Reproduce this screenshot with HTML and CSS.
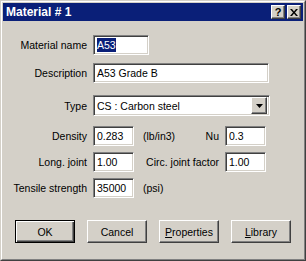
FILE: index.html
```html
<!DOCTYPE html>
<html lang="en">
<head>
    <meta charset="UTF-8">
    <title>Material # 1</title>
    <link rel="stylesheet" href="styles.css">
</head>
<body>
    <div class="window">
        <div class="frame">
            <div class="titlebar">
                <span class="title">Material # 1</span>
                <div class="titleButtons">
                    <span class="tbtn">?</span>
                    <span class="tbtn close">
                        <svg width="8" height="7" viewBox="0 0 8 7"><path d="M0 0h2l2 2.5L6 0h2L5 3.5 8 7H6L4 4.5 2 7H0l3-3.5z" fill="#000"/></svg>
                    </span>
                </div>
            </div>

            <div class="row r1">
                <label class="label">Material name</label>
                <div class="field w-name"><span class="sel">A53</span></div>
            </div>

            <div class="row r2">
                <label class="label">Description</label>
                <div class="field w-desc">A53 Grade B</div>
            </div>

            <div class="row r3">
                <label class="label">Type</label>
                <div class="field combo">
                    <span class="comboText">CS : Carbon steel</span>
                    <span class="dropBtn">
                        <svg width="7" height="4" viewBox="0 0 7 4"><path d="M0 0h7L3.5 4z" fill="#000"/></svg>
                    </span>
                </div>
            </div>

            <div class="row r4">
                <label class="label">Density</label>
                <div class="field w-num">0.283</div>
                <div class="mid">
                    <span class="unit">(lb/in3)</span>
                    <span>Nu</span>
                </div>
                <div class="field w-num">0.3</div>
            </div>

            <div class="row r5">
                <label class="label">Long. joint</label>
                <div class="field w-num">1.00</div>
                <div class="mid">
                    <span></span>
                    <span>Circ. joint factor</span>
                </div>
                <div class="field w-num">1.00</div>
            </div>

            <div class="row r6">
                <label class="label">Tensile strength</label>
                <div class="field w-num">35000</div>
                <div class="mid">
                    <span class="unit">(psi)</span>
                </div>
            </div>

            <div class="buttons">
                <button class="btn default">OK</button>
                <button class="btn">Cancel</button>
                <button class="btn"><u>P</u>roperties</button>
                <button class="btn"><u>L</u>ibrary</button>
            </div>
        </div>
    </div>
</body>
</html>
```

FILE: styles.css
```css
*{
    margin: 0px;
    padding: 0px;
    box-sizing: border-box;
}
body{
    background: #d4d0c8;
    font-family: "Liberation Sans", Arial, sans-serif;
    font-size: 10.5px;
    color: #000;
}
.window{
    width: 306px;
    height: 261px;
    border: 1px solid;
    border-color: #d4d0c8 #404040 #404040 #d4d0c8;
}
.frame{
    height: 100%;
    border: 1px solid;
    border-color: #fff #808080 #808080 #fff;
    padding: 1px;
}
/* title bar */
.titlebar{
    height: 18px;
    background: #0a1f78;
    display: flex;
    align-items: center;
    justify-content: space-between;
    padding: 0 2px 0 3px;
}
.title{
    color: #fff;
    font-weight: bold;
    font-size: 12px;
}
.titleButtons{
    display: flex;
    gap: 2px;
}
.tbtn{
    width: 14px;
    height: 14px;
    background: #d4d0c8;
    border: 1px solid;
    border-color: #fff #404040 #404040 #fff;
    box-shadow: inset -1px -1px #808080;
    display: flex;
    align-items: center;
    justify-content: center;
    font-weight: bold;
    font-size: 11px;
    line-height: 1;
}
/* rows */
.row{
    display: flex;
    align-items: center;
}
.r1{ margin-top: 14px; }
.r2{ margin-top: 8px; }
.r3{ margin-top: 12px; }
.r4{ margin-top: 10px; }
.r5{ margin-top: 6px; }
.r6{ margin-top: 6px; }
.label{
    width: 84px;
    text-align: right;
    margin-right: 6px;
}
.field{
    height: 20px;
    background: #fff;
    border: 1px solid;
    border-color: #808080 #fff #fff #808080;
    box-shadow: inset 1px 1px #404040, inset -1px -1px #d4d0c8;
    padding: 0 3px;
    line-height: 18px;
    white-space: nowrap;
    overflow: hidden;
}
.w-name{ width: 56px; }
.w-desc{ width: 176px; }
.w-num{ width: 41px; }
.sel{
    background: #0a1f78;
    color: #fff;
    display: inline-block;
    line-height: 14px;
}
.combo{
    width: 177px;
    height: 21px;
    display: flex;
    align-items: center;
    justify-content: space-between;
    padding: 2px;
}
.comboText{
    padding-left: 1px;
}
.dropBtn{
    width: 16px;
    height: 17px;
    background: #d4d0c8;
    border: 1px solid;
    border-color: #fff #404040 #404040 #fff;
    box-shadow: inset -1px -1px #808080;
    display: flex;
    align-items: center;
    justify-content: center;
}
.mid{
    width: 85px;
    display: flex;
    justify-content: space-between;
    padding-left: 9px;
    margin-right: 6px;
}
/* buttons */
.buttons{
    display: flex;
    gap: 12px;
    margin-top: 22px;
    padding-left: 12px;
}
.btn{
    width: 60px;
    height: 23px;
    background: #d4d0c8;
    font-family: inherit;
    font-size: 10.5px;
    border: 1px solid;
    border-color: #fff #404040 #404040 #fff;
    box-shadow: inset -1px -1px #808080;
}
.btn.default{
    border: 1px solid #000;
    box-shadow: inset 1px 1px #fff, inset -1px -1px #404040, inset -2px -2px #808080;
}
```
